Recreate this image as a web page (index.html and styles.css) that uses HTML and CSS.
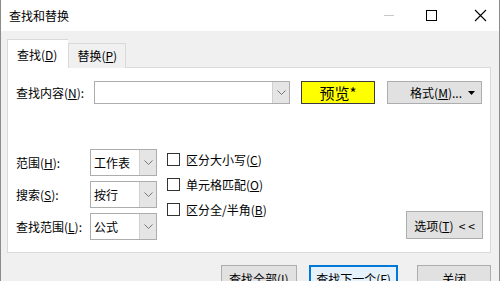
FILE: index.html
```html
<!DOCTYPE html>
<html lang="zh-CN">
<head>
    <meta charset="UTF-8">
    <title>查找和替换</title>
    <link rel="stylesheet" href="styles.css">
</head>
<body>
    <div class="window">
        <div class="titlebar">
            <span class="title">查找和替换</span>
            <div class="controls">
                <svg class="ctl" width="46" height="31" viewBox="0 0 46 31"><path d="M23 15.5h10" stroke="#c8c8c8" stroke-width="1"/></svg>
                <svg class="ctl" width="46" height="31" viewBox="0 0 46 31"><rect x="19.5" y="10.5" width="10" height="10" fill="none" stroke="#000" stroke-width="1"/></svg>
                <svg class="ctl" width="46" height="31" viewBox="0 0 46 31"><path d="M22 10l11 11M33 10l-11 11" stroke="#000" stroke-width="1.1"/></svg>
            </div>
        </div>

        <div class="content">
            <div class="tabs">
                <div class="tab active">查找(<u>D</u>)</div>
                <div class="tab">替换(<u>P</u>)</div>
            </div>

            <div class="panel">
                <div class="find-row">
                    <label class="find-label">查找内容(<u>N</u>):</label>
                    <div class="combo wide">
                        <span class="combo-text"></span>
                        <span class="combo-arrow"><svg width="9" height="5" viewBox="0 0 9 5"><path d="M0.5 0.5l4 4 4-4" fill="none" stroke="#777"/></svg></span>
                    </div>
                    <button class="preview">预览*</button>
                    <button class="btn format">格式(<u>M</u>)... <svg class="caret" width="7" height="4" viewBox="0 0 7 4"><path d="M0 0h7l-3.5 4z" fill="#000"/></svg></button>
                </div>

                <div class="options">
                    <div class="fields">
                        <label>范围(<u>H</u>):</label>
                        <div class="combo"><span class="combo-text">工作表</span><span class="combo-arrow"><svg width="9" height="5" viewBox="0 0 9 5"><path d="M0.5 0.5l4 4 4-4" fill="none" stroke="#777"/></svg></span></div>
                        <label>搜索(<u>S</u>):</label>
                        <div class="combo"><span class="combo-text">按行</span><span class="combo-arrow"><svg width="9" height="5" viewBox="0 0 9 5"><path d="M0.5 0.5l4 4 4-4" fill="none" stroke="#777"/></svg></span></div>
                        <label>查找范围(<u>L</u>):</label>
                        <div class="combo"><span class="combo-text">公式</span><span class="combo-arrow"><svg width="9" height="5" viewBox="0 0 9 5"><path d="M0.5 0.5l4 4 4-4" fill="none" stroke="#777"/></svg></span></div>
                    </div>

                    <div class="checks">
                        <div class="check"><span class="box"></span>区分大小写(<u>C</u>)</div>
                        <div class="check"><span class="box"></span>单元格匹配(<u>O</u>)</div>
                        <div class="check"><span class="box"></span>区分全/半角(<u>B</u>)</div>
                    </div>

                    <button class="btn toggle">选项(<u>T</u>)&nbsp; &lt; &lt;</button>
                </div>
            </div>

            <div class="actions">
                <button class="btn find-all">查找全部(<u>I</u>)</button>
                <button class="btn find-next">查找下一个(<u>F</u>)</button>
                <button class="btn close">关闭</button>
            </div>
        </div>
    </div>
</body>
</html>
```

FILE: styles.css
```css
body {
    margin: 0;
    width: 500px;
    height: 281px;
    overflow: hidden;
    font-family: "Noto Sans CJK SC", "Noto Sans", sans-serif;
    font-size: 12px;
    color: #000;
}

.window {
    height: 281px;
    border-left: 1px solid #8c8c8c;
    border-right: 1px solid #8c8c8c;
    background: #f0f0f0;
}

.titlebar {
    height: 31px;
    background: #fff;
    display: flex;
    align-items: center;
    justify-content: space-between;
}

.title {
    padding-left: 8px;
}

.controls {
    display: flex;
}

.ctl {
    display: block;
}

.content {
    padding: 9px 8px 0 6px;
}

.tabs {
    display: flex;
    align-items: flex-end;
    height: 28px;
    margin-bottom: -1px;
    position: relative;
}

.tab {
    height: 24px;
    line-height: 24px;
    padding: 0 8px;
    border: 1px solid #d9d9d9;
    border-bottom: none;
    background: #f0f0f0;
}

.tab.active {
    height: 28px;
    line-height: 30px;
    padding: 0 11px 0 9px;
    background: #fff;
    border-color: #d9d9d9;
    border-right: none;
}

u {
    text-decoration: underline;
    text-underline-offset: 1px;
}

.panel {
    background: #fff;
    border: 1px solid #d9d9d9;
    padding: 13px 7px 12px 8px;
}

.find-row {
    display: flex;
    align-items: center;
    height: 23px;
}

.find-label {
    width: 78px;
}

.combo {
    display: flex;
    height: 27px;
    box-sizing: border-box;
    border: 1px solid #adadad;
    background: #fff;
}

.combo.wide {
    width: 196px;
    height: 23px;
}

.combo-text {
    flex: 1;
    padding-left: 3px;
    display: flex;
    align-items: center;
}

.combo-arrow {
    width: 16px;
    background: #e5e5e5;
    border-left: 1px solid #d0d0d0;
    display: flex;
    align-items: center;
    justify-content: center;
}

.btn {
    font-family: inherit;
    font-size: 12px;
    color: #000;
    background: #e1e1e1;
    border: 1px solid #adadad;
    padding: 0;
    box-sizing: border-box;
}

.preview {
    width: 74px;
    height: 23px;
    margin-left: 11px;
    background: #ffff00;
    border: 1px solid #3c3c3c;
    font-family: inherit;
    font-size: 15px;
    color: #000;
    padding: 0;
}

.format {
    width: 95px;
    height: 23px;
    margin-left: 12px;
    display: flex;
    align-items: center;
    justify-content: flex-end;
    padding-right: 6px;
}

.caret {
    margin-left: 6px;
}

.options {
    display: flex;
    align-items: flex-end;
    margin-top: 45px;
}

.fields {
    display: grid;
    grid-template-columns: 74px 67px;
    grid-auto-rows: 27px;
    row-gap: 5px;
    align-items: center;
}

.checks {
    align-self: flex-start;
    margin-top: -2px;
    margin-left: 10px;
}

.check {
    height: 25px;
    display: flex;
    align-items: center;
}

.box {
    width: 11px;
    height: 11px;
    border: 1px solid #333;
    margin-right: 6px;
}

.toggle {
    width: 77px;
    height: 28px;
    margin-left: auto;
    margin-bottom: 1px;
}

.actions {
    display: flex;
    margin-top: 12px;
    padding-left: 214px;
}

.actions .btn {
    height: 26px;
}

.find-all {
    width: 76px;
}

.find-next {
    width: 90px;
    margin-left: 12px;
    border: 2px solid #0078d7;
    background: #e5f1fb;
}

.close {
    width: 74px;
    margin-left: 19px;
}
```
